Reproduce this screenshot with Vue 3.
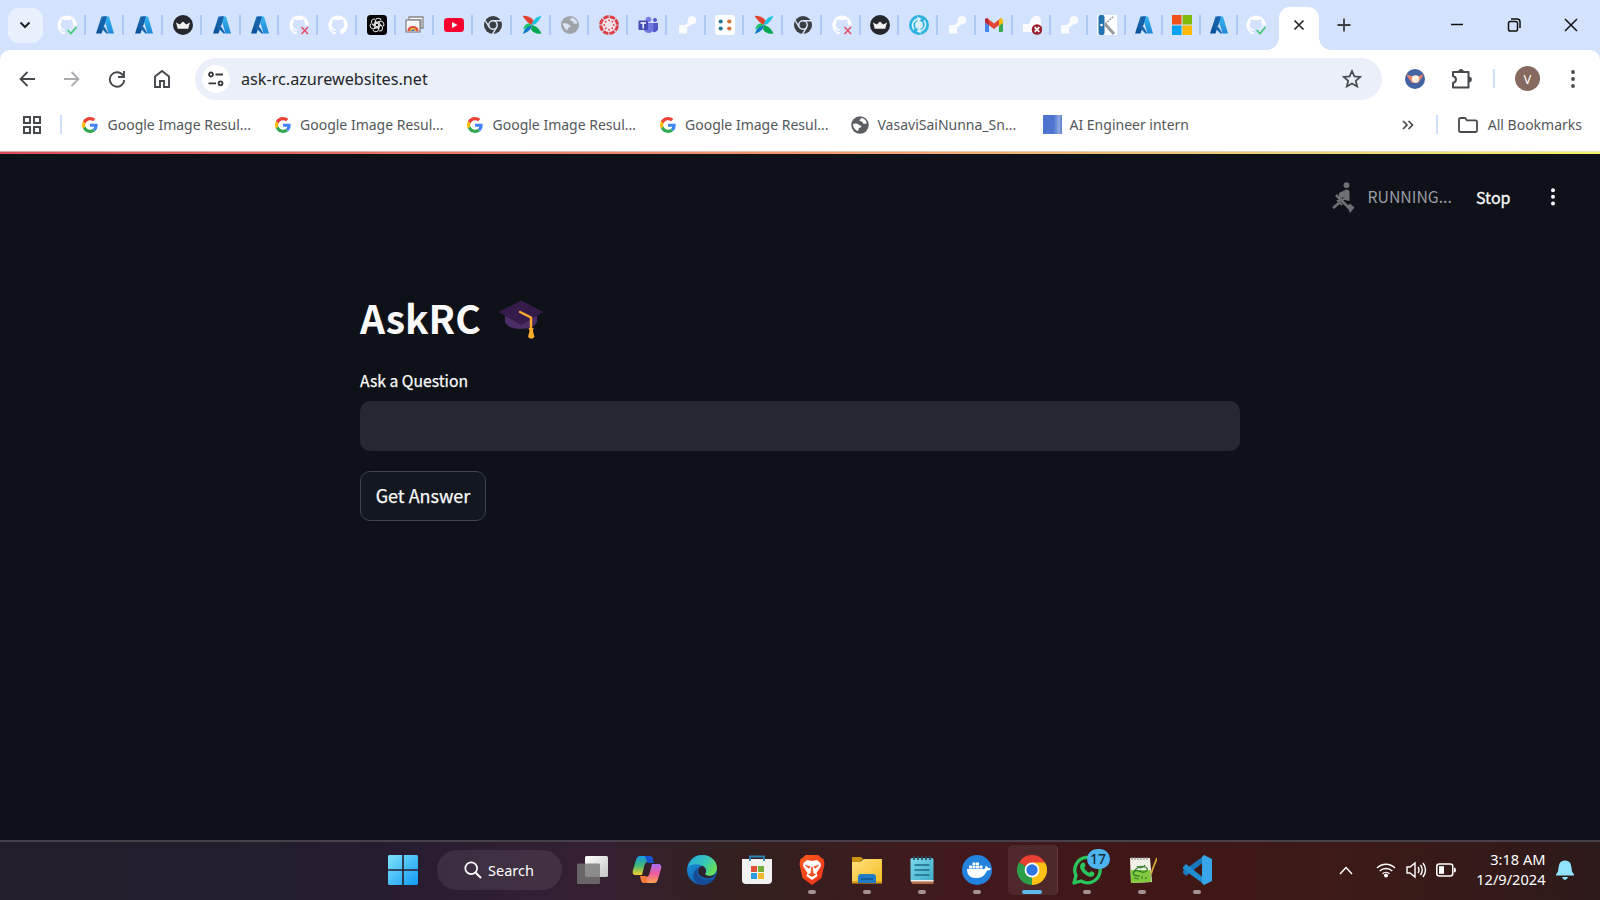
<script setup>
const wide = ['gh-ok', 'azure', 'azure', 'crown', 'azure', 'azure', 'gh-x', 'gh', 'gpt', 'store', 'youtube', 'chrome-dark', 'pinwheel', 'globe-grey', 'canvas', 'teams', 'link', 'dots', 'pinwheel', 'chrome-dark', 'gh-x', 'crown', 'sync']
const narrow = ['link', 'gmail', 'link-x', 'link', 'kaggle', 'azure', 'msft', 'azure']
const tabs = [...wide.map(icon => ({ icon, size: 'wide' })), ...narrow.map(icon => ({ icon, size: 'narrow' }))]
const google = [1, 2, 3, 4]
const apps = [
  { icon: 'brave' }, { icon: 'folder' }, { icon: 'notepad' }, { icon: 'docker' },
  { icon: 'chrome', active: true }, { icon: 'whatsapp', badge: '17' }, { icon: 'npp' }, { icon: 'vscode' }
]
const spokes = [0, 45, 90, 135, 180, 225, 270, 315]
const petals = [0, 60, 120, 180, 240, 300]
</script>

<template>
  <svg class="defs" aria-hidden="true">
    <defs>
      <linearGradient id="azL" x1="0" y1="0" x2="0" y2="1"><stop offset="0" stop-color="#1d6fb8" /><stop offset="1" stop-color="#0b4f95" /></linearGradient>
      <linearGradient id="azR" x1="0" y1="0" x2="0" y2="1"><stop offset="0" stop-color="#36b6f0" /><stop offset="1" stop-color="#1e88d6" /></linearGradient>
      <linearGradient id="winG" x1="0" y1="0" x2="1" y2="1"><stop offset="0" stop-color="#7fe4fb" /><stop offset="1" stop-color="#1199f3" /></linearGradient>
      <linearGradient id="foldG" x1="0" y1="0" x2="1" y2="1"><stop offset="0" stop-color="#ffe27c" /><stop offset="1" stop-color="#f5bb25" /></linearGradient>
      <linearGradient id="noteG" x1="0" y1="0" x2="1" y2="1"><stop offset="0" stop-color="#7bd9ec" /><stop offset="1" stop-color="#3dabc8" /></linearGradient>
      <linearGradient id="braveG" x1="0" y1="0" x2="1" y2="1"><stop offset="0" stop-color="#ff5a1c" /><stop offset="1" stop-color="#e8321c" /></linearGradient>
      <linearGradient id="copA" x1="0" y1="0" x2="0" y2="1"><stop offset="0" stop-color="#169ae6" /><stop offset=".5" stop-color="#41b878" /><stop offset="1" stop-color="#f6d02c" /></linearGradient>
      <linearGradient id="copB" x1="0" y1="0" x2="0" y2="1"><stop offset="0" stop-color="#a66bee" /><stop offset=".5" stop-color="#ee5ba2" /><stop offset="1" stop-color="#ffa34d" /></linearGradient>
      <linearGradient id="edgeA" x1="0" y1="0" x2="1" y2=".5"><stop offset="0" stop-color="#2aa8e0" /><stop offset=".6" stop-color="#35c6b8" /><stop offset="1" stop-color="#66dd5d" /></linearGradient>
      <linearGradient id="edgeB" x1="0" y1="0" x2=".6" y2="1"><stop offset="0" stop-color="#1c9de0" /><stop offset="1" stop-color="#1154a8" /></linearGradient>
      <linearGradient id="tvG" x1="0" y1="0" x2="1" y2="1"><stop offset="0" stop-color="#ffffff" /><stop offset="1" stop-color="#c4c4c4" /></linearGradient>

      <symbol id="azure" viewBox="0 0 20 20"><path d="M6.500 1.500H12L6.500 18.500H1z" fill="url(#azL)" /><path d="M9.500 1.500H14L19 18.500H13.500L9.500 5z" fill="url(#azR)" /><path d="M5 12h4.500l4 6.500h-2z" fill="#1766b0" /><path d="M8 1.500h4L9 11H5.500z" fill="#1661aa" /></symbol>
      <symbol id="cat" viewBox="0 0 20 20"><path fill="#fff" d="M10 .4a9.700 9.700 0 0 0-3 18.900c.5.1.7-.2.7-.5v-1.800c-2.800.6-3.400-1.200-3.400-1.200-.4-1.100-1-1.400-1-1.400-1-.6 0-.6 0-.6 1 0 1.500 1 1.500 1 .9 1.500 2.300 1 2.800.8.1-.6.4-1 .6-1.300-2.200-.2-4.500-1.100-4.500-4.800 0-1 .4-2 1-2.600-.1-.3-.4-1.300.1-2.600 0 0 .8-.3 2.700 1a9.500 9.500 0 0 1 5 0c1.900-1.300 2.700-1 2.700-1 .5 1.300.2 2.300.1 2.600.6.700 1 1.600 1 2.600 0 3.700-2.300 4.600-4.500 4.800.4.300.7.900.7 1.800v2.700c0 .3.2.6.7.5A9.700 9.700 0 0 0 10 .4z" /></symbol>
      <symbol id="gh" viewBox="0 0 20 20"><use href="#cat" width="20" height="20" /></symbol>
      <symbol id="gh-ok" viewBox="0 0 20 20"><use href="#cat" width="20" height="20" /><path d="M10.500 14.500l3.600 3.500 5.500-7" fill="none" stroke="#d3e2fb" stroke-width="4" /><path d="M10.500 15l3.500 3.500 5.500-6.500" fill="none" stroke="#45c97c" stroke-width="1.700" /></symbol>
      <symbol id="gh-x" viewBox="0 0 20 20"><use href="#cat" width="20" height="20" /><path d="M10.500 10.500h10v10h-10z" fill="#d3e2fb" /><path d="M12.500 12l6.500 7M19 12l-6.500 7" fill="none" stroke="#e35372" stroke-width="1.700" /></symbol>
      <symbol id="crown" viewBox="0 0 20 20"><circle cx="10" cy="10" r="10" fill="#24272e" /><path d="M3 7.500l3.800 2L10 6.500l3.200 3L17 7.500l-1.800 6.300H4.800z" fill="#f3f3f3" /></symbol>
      <symbol id="gpt" viewBox="0 0 20 20"><rect width="20" height="20" rx="3.500" fill="#050505" /><g fill="none" stroke="#e2e2e2" stroke-width="1"><path v-for="a in petals" :key="a" d="M7.300 11.500V6a3 3 0 0 1 5.500-1.600M7.600 6.800l4.600 2.600" :transform="`rotate(${a + 15} 10 10)`" /></g></symbol>
      <symbol id="store" viewBox="0 0 20 20"><path d="M4 2h14v11h-2V5H4z" fill="#fff" stroke="#878787" stroke-width="1.300" /><rect x="1" y="5" width="14" height="12" fill="#f5f5f5" stroke="#878787" stroke-width="1.300" /><path d="M3.500 16a4.600 4.600 0 0 1 9 0" fill="none" stroke="#e34b3c" stroke-width="2.500" /><path d="M5.500 16a2.500 2.500 0 0 1 5 0" fill="#3c79dd" stroke="#f1bc2e" stroke-width="1.400" /></symbol>
      <symbol id="youtube" viewBox="0 0 20 20"><rect y="3" width="20" height="14" rx="3.500" fill="#f7002f" /><path d="M8 7l5.500 3L8 13z" fill="#fff" /></symbol>
      <symbol id="chrome-dark" viewBox="0 0 20 20"><circle cx="10" cy="10" r="9" fill="#3a3e45" /><path d="M10 5.800h8.200M13.800 12.200l-4.300 7M6.200 12.200L2.200 5.500" stroke="#dbe6fa" stroke-width="1.400" /><circle cx="10" cy="10" r="4.200" fill="#3a3e45" stroke="#dbe6fa" stroke-width="1.500" /></symbol>
      <symbol id="pinwheel" viewBox="0 0 20 20"><path d="M10 10Q5 8 .5 .8Q9 1 11.500 5.500Z" fill="#e2412d" /><path d="M10 10Q10 3.500 19.500 .5Q17.500 6 13.500 9Z" fill="#19c4dc" /><path d="M10 10Q16 11 19.500 18.500Q12 19.500 9 14.500Z" fill="#05a852" /><path d="M10 10Q9.500 16 1 19Q2 14 6 11Z" fill="#127acc" /><path d="M10 10L1 14.500Q3 8 7 8.500Z" fill="#18c568" /></symbol>
      <symbol id="globe-grey" viewBox="0 0 20 20"><circle cx="10" cy="10" r="9" fill="#9fa4aa" /><path d="M2.500 8.500q4-1 6 1 2 0 2 2.500-3 0-3 3.500-3-1-5-7zM12 2.500q-2 1.500-2 3 3 0 3.500 3 3.500.5 4-.5-1-3.500-5.500-5.500z" fill="#d9e4f7" /></symbol>
      <symbol id="globe-dark" viewBox="0 0 20 20"><circle cx="10" cy="10" r="9.700" fill="#5b5e62" /><path d="M2 9q5-1.500 7 1 2.500 0 2.500 2.500-3.500 0-3.500 4.500Q3 15.500 2 9zM12 2q-2.500 1.500-2.500 3.500 3.500 0 4 3 3.500.5 4-.5Q17 4 12 2z" fill="#fff" /></symbol>
      <symbol id="canvas" viewBox="0 0 20 20"><circle cx="10" cy="10" r="7" fill="#f3e4ec" /><circle cx="10" cy="10" r="8.400" fill="none" stroke="#dc4245" stroke-width="3" stroke-dasharray="5.500 1.097" stroke-dashoffset="-.5" /><g v-for="a in spokes" :key="a" :transform="`rotate(${a} 10 10)`"><circle cx="10" cy="5.300" r=".9" fill="#dc4245" /></g></symbol>
      <symbol id="teams" viewBox="0 0 20 20"><circle cx="10.500" cy="4.500" r="2.800" fill="#7a80e8" /><circle cx="17" cy="5" r="2" fill="#5059c9" /><path d="M13 8h7v6a4 4 0 0 1-5 3z" fill="#5059c9" /><path d="M6 8h9.500v6a5 5 0 0 1-9.500 1z" fill="#7077df" /><rect x=".5" y="5.500" width="9.500" height="9.500" rx="1" fill="#464db5" /><path d="M2.500 8h5.500M5.200 8v5.500" stroke="#fff" stroke-width="1.400" /></symbol>
      <symbol id="link" viewBox="0 0 20 20"><path d="M2 10h6l4-4 2.500 3.500L10 12.500v6H2z" fill="#f9fbff" /><circle cx="15" cy="5.200" r="4.300" fill="#f9fbff" /></symbol>
      <symbol id="link-x" viewBox="0 0 20 20"><path d="M1 9h6l2-5 3-3h5l2 4v12H1z" fill="#f9fbff" /><circle cx="15" cy="14.500" r="5.300" fill="#9b2130" /><path d="M12.700 12.200l4.600 4.600M17.300 12.200l-4.600 4.600" stroke="#fff" stroke-width="1.700" /></symbol>
      <symbol id="dots" viewBox="0 0 20 20"><rect width="20" height="20" rx="3" fill="#fff" /><g fill="#247997"><circle cx="5.700" cy="6.500" r="2.100" /><circle cx="5.700" cy="13.500" r="2.100" /></g><g fill="#d06f36"><circle cx="14.300" cy="6.500" r="2.100" /><circle cx="14.300" cy="13.500" r="2.100" /></g></symbol>
      <symbol id="sync" viewBox="0 0 20 20"><circle cx="10" cy="10" r="10" fill="#2fb3e0" /><g fill="none" stroke="#e0f3fd" stroke-width="1.500"><path d="M5 14.500A6.500 6.500 0 0 1 9 4" /><path d="M15 5.500A6.500 6.500 0 0 1 11 16" /></g><circle cx="10" cy="10" r="4" fill="#d9effd" /><path d="M8 1.500l4.500 2.300-3.500 3.500zM12 18.500l-4.500-2.300 3.500-3.500z" fill="#e0f3fd" /></symbol>
      <symbol id="gmail" viewBox="0 0 20 20"><path d="M1 5h4v12H2a1 1 0 0 1-1-1z" fill="#4584eb" /><path d="M15 5h4v11a1 1 0 0 1-1 1h-3z" fill="#38a854" /><path d="M1 5l2-2 7 5.500L17 3v5.500L10 14 1 7.500z" fill="#e34435" /><path d="M1 3.500h3L5 10 1 7z" fill="#b5283a" /><path d="M15 5l2-2 2 1.500V8l-4 3z" fill="#f8bc09" /></symbol>
      <symbol id="kaggle" viewBox="0 0 20 20"><rect width="20" height="20" fill="#fff" /><rect x="1.500" width="6" height="20" rx="2" fill="#2372ad" /><path d="M8 9L17 1" stroke="#9a9a9a" stroke-width="1.500" stroke-dasharray="2 1" /><path d="M8 9l9 10" stroke="#93989c" stroke-width="3" /><circle cx="4.500" cy="10" r="1.300" fill="#fff" /></symbol>
      <symbol id="msft" viewBox="0 0 20 20"><path d="M0 0h9.500v9.500H0z" fill="#f1511b" /><path d="M10.500 0H20v9.500h-9.500z" fill="#80bb09" /><path d="M0 10.500h9.500V20H0z" fill="#02a4ef" /><path d="M10.500 10.500H20V20h-9.500z" fill="#fdb904" /></symbol>
      <symbol id="google" viewBox="0 0 48 48"><path fill="#EA4335" d="M24 9.500c3.540 0 6.710 1.220 9.210 3.600l6.850-6.850C35.900 2.380 30.470 0 24 0 14.620 0 6.510 5.380 2.560 13.220l7.980 6.190C12.430 13.720 17.740 9.500 24 9.500z" /><path fill="#4285F4" d="M46.980 24.550c0-1.570-.15-3.090-.38-4.550H24v9.020h12.940c-.58 2.960-2.260 5.480-4.780 7.180l7.730 6c4.510-4.180 7.090-10.360 7.090-17.650z" /><path fill="#FBBC05" d="M10.530 28.590a14.500 14.500 0 0 1 0-9.180l-7.980-6.190a24 24 0 0 0 0 21.560z" /><path fill="#34A853" d="M24 48c6.480 0 11.930-2.130 15.890-5.810l-7.730-6c-2.150 1.450-4.920 2.300-8.160 2.300-6.260 0-11.570-4.220-13.470-9.910l-7.980 6.190C6.510 42.620 14.620 48 24 48z" /></symbol>

      <symbol id="copilot" viewBox="0 0 30 30"><path d="M8 1h9c3 0 3 2 4 6h-5c-2 0-3 1-4 5l-2 8H4c-3 0-4-2-3-5L4 5c1-3 2-4 4-4z" fill="url(#copA)" /><path d="M12 1h6c3 0 3 3 4 7h-5c-2 0-2-1-3-4s-1-3-2-3z" fill="#1753cf" /><path d="M22 28h-9c-3 0-3-2-4-6h4c3 0 4-1 5-5l2-8h6c3 0 4 2 3 5l-3 10c-1 3-2 4-4 4z" fill="url(#copB)" /><path d="M17 28h-5c-3 0-3-3-4-7h5c2 0 2 1 2 4 0 2 1 3 2 3z" fill="#f5793b" /></symbol>
      <symbol id="edge" viewBox="0 0 30 30"><circle cx="15" cy="15" r="15" fill="url(#edgeB)" /><path d="M1 12C3 4 9 0 15 0c9 0 15 6 15 13 0 5-4 8-8 8-3 0-5-1-4-2 2-2 2-5-1-7C12 8 4 9 1 12z" fill="url(#edgeA)" /><path d="M11 16c0-3 2-5 5-5 3 2 4 5 2 8 1 2 7 3 11 0-2 3-6 5-10 4-5-1-8-3-8-7z" fill="#2c2230" /><path d="M11 13c-3 6 2 12 10 12 3 0 5-1 7-2-4 6-10 8-16 6-7-3-8-12-1-16z" fill="#164b98" /></symbol>
      <symbol id="msstore" viewBox="0 0 30 30"><path d="M0 4h30v21a4 4 0 0 1-4 4H4a4 4 0 0 1-4-4z" fill="#f2f2f2" /><path d="M8 6V1.500h14V6" fill="none" stroke="#2986b8" stroke-width="1.800" /><path d="M9 11h6v6H9z" fill="#df5037" /><path d="M16 11h6v6h-6z" fill="#77ae3a" /><path d="M9 18h6v6H9z" fill="#2c9bde" /><path d="M16 18h6v6h-6z" fill="#f3b72a" /></symbol>
      <symbol id="brave" viewBox="0 0 30 30"><path d="M8.500 0h13l3 3 2 1 1 5-3 14-9.500 7-9.500-7L2.500 9l1-5 2-1z" fill="url(#braveG)" /><path d="M6.500 8l3.500-3 5 1 5-1 3.500 3 .5 3-4.500 7 1 3-5.500 4-5.500-4 1-3L6 11z" fill="#fff" /><path d="M8.500 10.500l4.500 1-1 1.800zM21.500 10.500l-4.500 1 1 1.800zM14.700 12h.6l.7 6h-2zM11.500 19.500l3.500-1.500 3.500 1.500L15 21.500z" fill="#ef4a20" stroke="#ef4a20" stroke-width=".7" /></symbol>
      <symbol id="folder" viewBox="0 0 30 30"><path d="M0 2h9l3 3h-3L8 10H0z" fill="#cc9412" /><path d="M0 7h8l4-3h18v24H0z" fill="url(#foldG)" /><path d="M0 26h30v2.500H0z" fill="#e0a21b" /><path d="M6 28v-6a3 3 0 0 1 3-3h12a3 3 0 0 1 3 3v6z" fill="#1f7cc5" /><path d="M9 24h12" stroke="#105493" stroke-width="1.500" /></symbol>
      <symbol id="notepad" viewBox="0 0 30 30"><rect x="3.500" y="3" width="23" height="24" rx="1.500" fill="url(#noteG)" /><path d="M4 26h22.500v3H5z" fill="#b26c48" /><path d="M4 25h22.500v1.500H4z" fill="#eee" /><path d="M7 1v4M11 1v4M15 1v4M19 1v4M23 1v4" stroke="#284b60" stroke-width="1.700" /><path d="M7.500 10h15M7.500 15h15M7.500 20h15" stroke="#1c6c84" stroke-width="1.300" /></symbol>
      <symbol id="docker" viewBox="0 0 30 30"><circle cx="15" cy="15" r="15" fill="#2382de" /><path d="M5 14h17c1 0 2-1 1-3 2 0 3 1 3 2 1 0 2 0 3 .5-1 2-2 2-4 2-2 5-5 7.500-11 7.500-6 0-9-3-9-9z" fill="#fff" /><path d="M7 10.500h3v3H7zM10.500 10.500h3v3h-3zM14 10.500h3v3h-3zM17.500 10.500h3v3h-3zM10.500 7.500h3v2.500h-3zM14 7.500h3v2.500h-3z" fill="#fff" /></symbol>
      <symbol id="chrome" viewBox="0 0 30 30"><path d="M15 15L2 7.500A15 15 0 0 1 28 7.500z" fill="#e84031" /><path d="M15 15L15 30A15 15 0 0 1 2 7.500z" fill="#2d9d4a" /><path d="M15 15L28 7.500A15 15 0 0 1 15 30z" fill="#fbc116" /><path d="M15 7.500h13L21.500 19 15 30V15z" fill="#fbc116" /><path d="M2 7.500l6.500 11.300L15 15z" fill="#2d9d4a" /><circle cx="15" cy="15" r="7.400" fill="#fff" /><circle cx="15" cy="15" r="5.700" fill="#2f74e5" /></symbol>
      <symbol id="whatsapp" viewBox="0 0 30 30"><path d="M2 28l2-7.500A12.700 12.700 0 1 1 9 26z" fill="none" stroke="#2ac45d" stroke-width="3.300" stroke-linejoin="round" /><path d="M10 8c2-1 3 0 3.500 2.500 0 1-1.500 2-1.200 2.500 1 2 2.700 3.700 4.700 4.700.7.3 1.500-1.700 2.500-1.500 3 1 3.500 2 2.500 4-2 2.500-4.500 2-8-.2S8 14.500 8 11.500c0-1.500 1-3 2-3.500z" fill="#2ac45d" /></symbol>
      <symbol id="npp" viewBox="0 0 30 30"><path d="M3 3h20l2 24-21 1z" fill="#f1f1e8" /><path d="M3.500 15h20l.8 12L4 28z" fill="#85c93e" /><path d="M5 2v3M8 2v3M11 2v3M14 2v3M17 2v3M20 2v3" stroke="#858585" /><path d="M6 18c4-6 7-8 12-6s1 6-3 5-6-3-8 0 1 4 6 4M10 11c2 3 7 2 8-1M15 24v-3M19 24v-2M7 23l5 1" fill="none" stroke="#2b7c28" stroke-width="1.200" /><path d="M30 3l-4 10-2 6" fill="none" stroke="#d9a63a" stroke-width="1.800" /></symbol>
      <symbol id="vscode" viewBox="0 0 30 30"><path d="M1 18l3 3 19-15V0L1 16z" fill="#1879bd" /><path d="M1 12l3-3 19 15v6L1 14z" fill="#218ed0" /><path d="M22 0l8 4v22l-8 4-2-2V2z" fill="#37a5e8" /></symbol>
    </defs>
  </svg>

  <div class="screen">
    <header class="tabstrip">
      <div class="tabsearch"><svg width="12" height="8" viewBox="0 0 12 8"><path d="M1.500 1.500L6 6l4.500-4.500" fill="none" stroke="#1f2226" stroke-width="2" /></svg></div>
      <div v-for="(t, i) in tabs" :key="i" class="tab" :class="t.size"><svg class="fav"><use :href="'#' + t.icon" /></svg><i class="sep" /></div>
      <div class="tab last"><svg class="fav"><use href="#gh-ok" /></svg></div>
      <div class="active-tab"><svg width="12" height="12" viewBox="0 0 12 12"><path d="M1.500 1.500l9 9M10.500 1.500l-9 9" stroke="#26292c" stroke-width="1.700" /></svg></div>
      <svg class="plus" width="14" height="14" viewBox="0 0 14 14"><path d="M7 .5v13M.5 7h13" stroke="#3c4043" stroke-width="1.800" /></svg>
      <div class="winctl">
        <svg width="14" height="14" viewBox="0 0 14 14"><path d="M1 6.500h12" stroke="#111" stroke-width="1.500" /></svg>
        <svg width="14" height="14" viewBox="0 0 14 14"><g fill="none" stroke="#111" stroke-width="1.500"><rect x="1.500" y="3.500" width="9" height="9.500" rx="1.800" /><path d="M4 1h6a3 3 0 0 1 3 3v6" /></g></svg>
        <svg width="14" height="14" viewBox="0 0 14 14"><path d="M1 1l12 12M13 1L1 13" stroke="#111" stroke-width="1.500" /></svg>
      </div>
    </header>

    <div class="chrome-body">
      <nav class="toolbar">
        <div class="navs">
          <svg width="18" height="18" viewBox="0 0 18 18"><path d="M17 9H2.500M9.500 2l-7 7 7 7" fill="none" stroke="#46494d" stroke-width="1.800" /></svg>
          <svg width="18" height="18" viewBox="0 0 18 18"><path d="M1 9h14.500M8.500 2l7 7-7 7" fill="none" stroke="#a9abae" stroke-width="1.800" /></svg>
          <svg width="18" height="18" viewBox="0 0 18 18"><path d="M15 5.500A7.200 7.200 0 1 0 16.200 10M16 1v6h-6" fill="none" stroke="#46494d" stroke-width="1.900" /></svg>
          <svg width="18" height="20" viewBox="0 0 18 20"><path d="M2 18V7.500L9 2l7 5.500V18h-5v-6H7v6z" fill="none" stroke="#46494d" stroke-width="1.900" /></svg>
        </div>
        <div class="omnibox">
          <span class="tune"><svg width="18" height="16" viewBox="0 0 18 16"><g fill="none" stroke="#35383c" stroke-width="1.800"><circle cx="4" cy="3.500" r="2" /><path d="M8.500 3.500H16M1.500 12.300H9" /><circle cx="13.500" cy="12.300" r="2" /></g></svg></span>
          <span class="url">ask-rc.azurewebsites.net</span>
          <svg class="star" width="20" height="20" viewBox="0 0 20 20"><path d="M10 2l2.400 5.400 5.900.5-4.500 3.900 1.400 5.700L10 14.500l-5.200 3 1.400-5.700-4.500-3.900 5.900-.5z" fill="none" stroke="#46494d" stroke-width="1.700" /></svg>
        </div>
        <svg class="ext" width="20" height="20" viewBox="0 0 20 20"><circle cx="10" cy="10" r="10" fill="#4264a3" /><path d="M1 5l5 2h8l5-2-3 5-3 4H7l-3-4z" fill="#e78368" /><circle cx="10.500" cy="10" r="3.700" fill="#fff0df" /></svg>
        <svg class="puzzle" width="22" height="22" viewBox="0 0 22 22"><path d="M2 4h15.500v15.500H2V15q3-1 3-3.500T2 8z" fill="none" stroke="#46494d" stroke-width="2" stroke-linejoin="round" /><path d="M7.500 4a2.500 2.500 0 0 1 5 0zM18 9a2.500 2.500 0 0 1 0 5z" fill="#46494d" stroke="#46494d" /></svg>
        <i class="vline tv" />
        <span class="avatar">V</span>
        <svg class="kebab" width="4" height="18" viewBox="0 0 4 18"><g fill="#46494d"><circle cx="2" cy="2" r="1.900" /><circle cx="2" cy="9" r="1.900" /><circle cx="2" cy="16" r="1.900" /></g></svg>
      </nav>
      <nav class="bookmarks">
        <svg class="grid4" width="18" height="18" viewBox="0 0 18 18"><path d="M1 1h6v6H1zM11 1h6v6h-6zM1 11h6v6H1zM11 11h6v6h-6z" fill="none" stroke="#46494d" stroke-width="2" /></svg>
        <i class="vline bv" />
        <div v-for="g in google" :key="g" class="bm goog"><svg width="16" height="16"><use href="#google" /></svg><span>Google Image Resul...</span></div>
        <div class="bm vas"><svg width="18" height="18"><use href="#globe-dark" /></svg><span>VasaviSaiNunna_Sn...</span></div>
        <div class="bm intern"><i class="bluebox" /><span>AI Engineer intern</span></div>
        <div class="bmright">
          <svg width="12" height="10" viewBox="0 0 12 10"><path d="M1 1l4 4-4 4M6.500 1l4 4-4 4" fill="none" stroke="#46494d" stroke-width="1.700" /></svg>
          <i class="vline" />
          <svg class="fold" width="20" height="16" viewBox="0 0 20 16"><path d="M1 13.500v-11A1.500 1.500 0 0 1 2.500 1H7l2 2.300h8.500A1.500 1.500 0 0 1 19 4.800v8.700a1.500 1.500 0 0 1-1.500 1.500h-15A1.500 1.500 0 0 1 1 13.500z" fill="none" stroke="#46494d" stroke-width="1.800" /></svg>
          <span class="allbm">All Bookmarks</span>
        </div>
      </nav>
    </div>

    <main class="app">
      <div class="decoration" />
      <div class="status">
        <svg width="24" height="32" viewBox="0 0 24 32"><g fill="#6d6f74"><circle cx="14.500" cy="3.200" r="2.900" /><path d="M7 11l7-3.500q3.500-.5 3.500 3v8.500l-5-1-1.500-3-4 2.500z" /></g><g fill="none" stroke="#6d6f74" stroke-width="2.800"><path d="M4 13l13 13M1 26l6-5" /><path d="M12 17l-6 2 4 4" stroke-width="2" /></g><path d="M15 24l3-2.500 4.500 4-4.500 5.500z" fill="#6d6f74" /></svg>
        <span class="running">RUNNING...</span>
        <span class="stop">Stop</span>
        <svg class="dots3" width="6" height="18" viewBox="0 0 6 18"><g fill="#fafafa"><circle cx="3" cy="2.200" r="2" /><circle cx="3" cy="8.800" r="2" /><circle cx="3" cy="15.400" r="2" /></g></svg>
      </div>
      <section class="block">
        <h1><span>AskRC</span><svg width="46" height="40" viewBox="0 0 46 40"><path d="M7 14h32v8q-3 7-16 7T7 22z" fill="#4c2d66" /><path d="M23 .5L45.500 12 23 25 .5 12z" fill="#351b49" /><path d="M22 12l11 5.500v13" fill="none" stroke="#fbab2c" stroke-width="2.400" stroke-linecap="round" stroke-linejoin="round" /><path d="M30.500 28h5l-.5 3 1.500 6q-3.300 3.500-6.500 0l1.500-6z" fill="#fbab2c" /></svg></h1>
        <label>Ask a Question</label>
        <div class="field" />
        <button>Get Answer</button>
      </section>
    </main>

    <footer class="taskbar">
      <svg class="win" width="30" height="30" viewBox="0 0 30 30"><path d="M1 0h13.200v14.200H0V1zM15.800 0H29l1 1v13.200H15.800zM0 15.800h14.200V30H1l-1-1zM15.800 15.800H30V29l-1 1H15.800z" fill="url(#winG)" /></svg>
      <div class="search"><svg width="18" height="18" viewBox="0 0 18 18"><circle cx="7.200" cy="7.200" r="5.900" fill="none" stroke="#fff" stroke-width="1.700" /><path d="M11.500 11.500l5.500 5.500" stroke="#fff" stroke-width="1.900" /></svg><span>Search</span></div>
      <svg class="tview" width="32" height="30" viewBox="0 0 32 30"><rect x="8" y="1" width="23" height="21" rx="1.500" fill="url(#tvG)" /><rect x="0" y="8.500" width="23" height="20.500" rx="1.500" fill="#777" fill-opacity=".8" /></svg>
      <div class="cell"><svg><use href="#copilot" /></svg></div>
      <div class="cell"><svg><use href="#edge" /></svg></div>
      <div class="cell"><svg><use href="#msstore" /></svg></div>
      <div v-for="a in apps" :key="a.icon" class="cell" :class="{ active: a.active }">
        <svg><use :href="'#' + a.icon" /></svg><i class="ind" /><b v-if="a.badge">{{ a.badge }}</b>
      </div>
      <div class="tray">
        <svg class="up" width="14" height="9" viewBox="0 0 14 9"><path d="M1 8l6-6.500L13 8" fill="none" stroke="#fff" stroke-width="1.500" /></svg>
        <svg class="wifi" width="20" height="16" viewBox="0 0 20 16"><g fill="none" stroke="#fff" stroke-width="1.400"><path d="M1 6a12.700 12.700 0 0 1 18 0M3.700 9a9 9 0 0 1 12.600 0M6.500 11.800a5 5 0 0 1 7 0" /></g><circle cx="10" cy="13.600" r="2" fill="#fff" /></svg>
        <svg class="vol" width="21" height="18" viewBox="0 0 21 18"><g fill="none" stroke="#fff" stroke-width="1.400"><path d="M1 6h3l5-4v14l-5-4H1zM12 6q2 3 0 6M14.500 4q3.500 5 0 10M17 2q5 7 0 14" /></g></svg>
        <svg class="bat" width="20" height="14" viewBox="0 0 20 14"><rect x=".8" y="1" width="16" height="12" rx="2.500" fill="none" stroke="#fff" stroke-width="1.500" /><rect x="3" y="3.200" width="5" height="7.600" fill="#fff" /><path d="M18 4.500q2 0 2 2.500t-2 2.500z" fill="#fff" /></svg>
        <div class="clock"><span class="time">3:18 AM</span><span class="date">12/9/2024</span></div>
        <svg class="bell" width="18" height="20" viewBox="0 0 18 20"><path d="M9 .5q6 0 6.500 7l.5 4 2 3v1H0v-1l2-3 .5-4Q3 .5 9 .5zM6 17h6q-1 3-3 3t-3-3z" fill="#8fe3fa" /></svg>
      </div>
    </footer>
  </div>
</template>

<style>
html, body { margin: 0; overflow: hidden; }
</style>

<style scoped>
* { box-sizing: border-box; }
svg { display: block; flex: none; }
.defs { position: absolute; width: 0; height: 0; }
.screen { width: 1600px; height: 900px; display: flex; flex-direction: column; overflow: hidden; font-family: "Noto Sans", "Open Sans", sans-serif; background: linear-gradient(#d3e2fd 70px, #0e1118 70px); }
.tabstrip { height: 50px; background: #d3e2fd; display: flex; align-items: center; flex: none; }
.tabsearch { width: 35px; height: 35px; margin: 0 4.400px 0 7.500px; border-radius: 11px; background: #e9f0fd; display: flex; align-items: center; justify-content: center; flex: none; }
.tab { height: 50px; display: flex; align-items: center; justify-content: space-between; flex: none; padding-left: 9.800px; }
.wide { width: 38.750px; }
.narrow { width: 37.500px; padding-left: 8.800px; }
.last { width: 40.600px; padding-left: 8px; }
.fav { width: 20px; height: 20px; }
.sep { width: 2px; height: 20px; background: #adc8f5; }
.active-tab { width: 40px; height: 43px; align-self: flex-end; background: #fff; border-radius: 11px 11px 0 0; display: flex; align-items: center; justify-content: center; padding-bottom: 7px; position: relative; flex: none; }
.active-tab::before, .active-tab::after { content: ""; position: absolute; bottom: 0; width: 12px; height: 12px; }
.active-tab::before { left: -12px; background: radial-gradient(circle at 0 0, #d3e2fd 11.500px, #fff 12px); }
.active-tab::after { right: -12px; background: radial-gradient(circle at 100% 0, #d3e2fd 11.500px, #fff 12px); }
.plus { margin-left: 18px; }
.winctl { margin-left: auto; margin-right: 22px; display: flex; gap: 43px; }
.chrome-body { height: 101px; flex: none; background: #fff; border-radius: 10px 10px 0 0; }
.toolbar { height: 57px; display: flex; align-items: center; }
.navs { width: 195px; padding-left: 18px; display: flex; align-items: center; gap: 27px; }
.omnibox { width: 1187px; height: 42px; border-radius: 21px; background: #ebeff9; display: flex; align-items: center; padding-left: 7px; }
.tune { width: 28px; height: 28px; border-radius: 50%; background: #fff; display: flex; align-items: center; justify-content: center; }
.url { margin-left: 11px; font-size: 16.200px; color: #24272b; white-space: nowrap; padding-top: 1px; }
.star { margin-left: auto; margin-right: 20px; }
.ext { margin-left: 23px; }
.puzzle { margin-left: 26px; }
.vline { width: 2px; height: 19px; background: #cfe0f8; flex: none; }
.tv { margin-left: 20px; }
.avatar { width: 25px; height: 25px; border-radius: 50%; background: #86695f; color: #fff; font-size: 13px; display: flex; align-items: center; justify-content: center; margin-left: 20px; }
.kebab { margin-left: 31px; }
.bookmarks { height: 35px; display: flex; align-items: center; font-size: 14px; color: #54575a; white-space: nowrap; }
.bookmarks span { padding-bottom: 1px; }
.grid4 { margin-left: 23px; }
.bv { margin: 0 20px 0 19px; }
.bm { display: flex; align-items: center; flex: none; }
.goog { width: 192.500px; gap: 9.500px; }
.vas { width: 191.500px; gap: 8.500px; margin-left: -1px; }
.intern { gap: 8px; }
.bluebox { width: 19px; height: 19px; background: linear-gradient(90deg, #4e74d0 55%, #91a9e2 85%, #5c7fd1); }
.bmright { margin-left: auto; display: flex; align-items: center; padding-right: 18px; }
.bmright .vline { margin: 0 20px 0 22px; }
.fold { margin-right: 10px; }
.app { height: 689px; flex: none; background: #0e1118; display: flex; flex-direction: column; font-family: "Noto Sans CJK SC", "Noto Sans CJK JP", sans-serif; color: #fafafa; }
.decoration { height: 3px; flex: none; background: linear-gradient(rgba(230, 225, 225, .6) 1px, transparent 1px), linear-gradient(90deg, #d94d5c, #e87a62 30%, #f0a070 55%, #e9d07c 80%, #f2f36b); }
.status { height: 84px; flex: none; display: flex; align-items: center; justify-content: flex-end; padding-right: 44.500px; font-size: 16px; }
.status > svg:first-child { margin-top: 3px; }
.running { color: #9a9ba5; margin-left: 12px; width: 85px; white-space: nowrap; font-size: 15.800px; }
.stop { margin-left: 23.500px; width: 36px; -webkit-text-stroke: .3px #fafafa; padding-top: 1px; }
.dots3 { margin-left: 37.500px; margin-top: 1px; }
.block { width: 880px; margin: 42px auto 0; display: flex; flex-direction: column; align-items: flex-start; }
h1 { margin: 0; height: 83px; padding-bottom: 3px; display: flex; align-items: center; gap: 17px; font-size: 39px; font-weight: 700; line-height: 60px; }
h1 span { padding-bottom: 7px; }
h1 svg { margin-top: 0; }
label { font-size: 15.700px; line-height: 24px; height: 38px; padding-top: 6px; -webkit-text-stroke: .25px #fafafa; }
.field { width: 880px; height: 50px; border-radius: 10px; background: #272730; flex: none; }
button { margin: 20px 0 0; width: 126px; height: 50px; padding: 0 0 3px; border: 1px solid #41434a; border-radius: 10px; background: #131720; color: #fafafa; font: 400 18px "Noto Sans CJK SC", sans-serif; white-space: nowrap; -webkit-text-stroke: .25px #fafafa; }
.taskbar { height: 60px; flex: none; border-top: 2px solid #45404a; display: flex; align-items: center; padding-bottom: 2px; background: linear-gradient(90deg, #221e2b 0, #231e2e 14%, #261c30 24%, #331f34 34%, #34202b 40%, #33201f 46%, #42191d 61%, #3f1715 72%, #3c1a15 84%, #2d1a1b 100%); color: #fff; }
.win { margin-left: 388px; }
.search { margin-left: 19px; width: 125px; height: 40px; border-radius: 20px; background: rgba(255, 255, 255, .08); display: flex; align-items: center; gap: 6px; padding-left: 27px; font-size: 14.500px; }
.tview { margin-left: 15px; margin-right: 10.500px; }
.cell { width: 55px; height: 58px; display: flex; align-items: center; justify-content: center; position: relative; flex: none; }
.cell > svg { width: 30px; height: 30px; position: relative; }
.ind { position: absolute; bottom: 5px; width: 8px; height: 4px; border-radius: 2px; background: #a69292; }
.active .ind { width: 20px; background: #60b9ed; }
.active::before { content: ""; position: absolute; left: 3px; top: 4px; width: 49px; height: 50px; border-radius: 5px; background: rgba(255, 255, 255, .07); border-right: 1px solid rgba(255, 255, 255, .12); }
.cell b { position: absolute; left: 27px; top: 8px; width: 23px; height: 20px; border-radius: 10px; background: #4db4ef; color: #132d42; font: 500 14px/20px "Noto Sans", sans-serif; text-align: center; }
.tray { margin-left: auto; display: flex; align-items: center; padding-right: 26px; }
.wifi { margin-left: 23px; }
.vol { margin-left: 10px; }
.bat { margin-left: 9px; }
.clock { width: 89.500px; display: flex; flex-direction: column; align-items: flex-end; font-size: 14.600px; line-height: 20px; white-space: nowrap; padding-bottom: 2px; }
.bell { margin-left: 10.500px; }
</style>
